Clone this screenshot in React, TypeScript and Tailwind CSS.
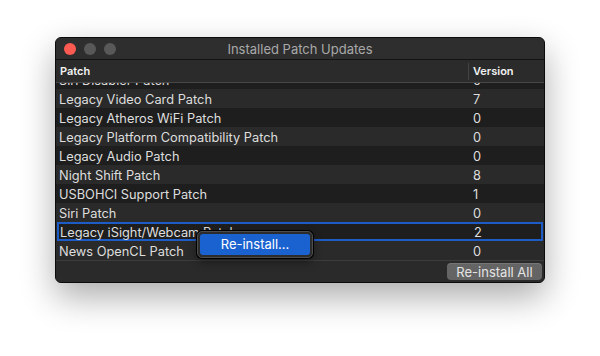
export default function App() {
  const rows: [string, string][] = [
    ["Siri Disabler Patch", "0"],
    ["Legacy Video Card Patch", "7"],
    ["Legacy Atheros WiFi Patch", "0"],
    ["Legacy Platform Compatibility Patch", "0"],
    ["Legacy Audio Patch", "0"],
    ["Night Shift Patch", "8"],
    ["USBOHCI Support Patch", "1"],
    ["Siri Patch", "0"],
    ["Legacy iSight/Webcam Patch", "2"],
    ["News OpenCL Patch", "0"],
  ];
  return (
    <div
      className="w-[600px] h-[356px] bg-white pt-[37px] pl-[55px]"
      style={{ fontFamily: 'Inter, "Liberation Sans", Arial, sans-serif' }}
    >
      <div className="relative w-[490px] h-[246px] rounded-[6px] border border-[#0b0b0b] bg-[#2a2a2a] shadow-[0_14px_34px_rgba(0,0,0,0.33)] flex flex-col overflow-hidden">
        {/* title bar */}
        <div className="h-[22px] shrink-0 flex items-center bg-[#2e2e2e] border-b border-[#141414] relative">
          <div className="flex items-center gap-[8px] pl-[8px]">
            <div className="w-[12px] h-[12px] rounded-full bg-[#fd5a52]" />
            <div className="w-[12px] h-[12px] rounded-full bg-[#585858]" />
            <div className="w-[12px] h-[12px] rounded-full bg-[#585858]" />
          </div>
          <div className="flex-1 text-center text-[13px] text-[#a9a9a9] pr-[60px] pt-[1px] leading-none">
            Installed Patch Updates
          </div>
        </div>
        {/* header */}
        <div className="h-[23px] shrink-0 flex items-center bg-[#2b2b2b] border-b border-[#474747] text-[11px] font-semibold text-[#f2f2f2]">
          <div className="w-[412px] pl-[4px]">Patch</div>
          <div className="h-[17px] w-px bg-[#444]" />
          <div className="pl-[4px]">Version</div>
        </div>
        {/* rows */}
        <div className="h-[177px] shrink-0 overflow-hidden">
          <div className="mt-[-13px]">
            {rows.map(([name, v], i) => {
              const sel = i === 8;
              const bg = i % 2 === 0 ? "bg-[#1e1e1e]" : "bg-[#2a2a2a]";
              return (
                <div
                  key={name}
                  className={`h-[19px] flex items-center text-[12.8px] text-[#dedede] pt-[2px] ${bg} ${sel ? "border-2 border-[#1d5bc6] mx-[1px]" : ""}`}
                >
                  <div className={sel ? "w-[411px] pl-[1px]" : "w-[413px] pl-[3px]"}>{name}</div>
                  <div className="pl-[4px]">{v}</div>
                </div>
              );
            })}
          </div>
        </div>
        {/* bottom bar */}
        <div className="flex-1 border-t border-[#3c3c3c] bg-[#2a2a2a] flex items-center justify-end pr-[2px]">
          <div className="h-[17px] w-[95px] rounded-[4px] bg-[#646464] shadow-[inset_0_1px_0_rgba(255,255,255,0.12)] flex items-center justify-center text-[13px] text-[#e4e4e4] leading-none pt-[1px]">
            Re-install All
          </div>
        </div>
        {/* context menu */}
        <div className="absolute left-[141px] top-[193px] w-[116px] h-[27px] rounded-[5px] bg-[#2c2c2c] border border-[#4d4d4d] shadow-[0_0_0_1px_#000,0_4px_10px_rgba(0,0,0,0.4)] p-[2px]">
          <div className="h-full w-full rounded-[3px] bg-[#1a62d0] flex items-center justify-center text-[13px] text-white pt-[1px]">
            Re-install...
          </div>
        </div>
      </div>
    </div>
  );
}
